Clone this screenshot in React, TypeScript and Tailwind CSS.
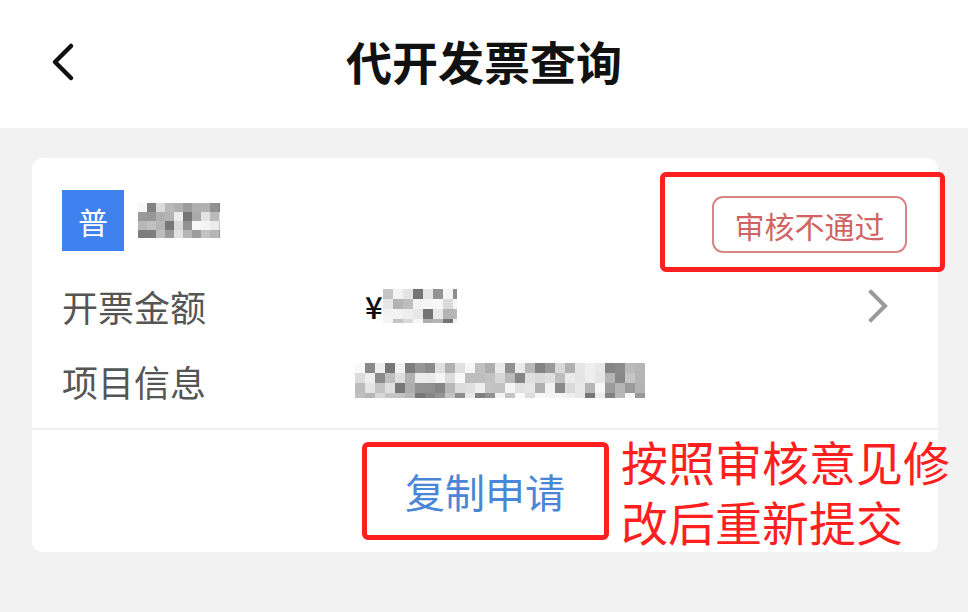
import React from "react";

const FONT = '"Noto Sans CJK SC", "Noto Sans", sans-serif';
const NOTE_FONT = '"Liberation Sans", "Noto Sans CJK SC", sans-serif';

function Mosaic({ w, h, cell, seed, dark }: { w: number; h: number; cell: number; seed: number; dark: number }) {
  const cols = Math.ceil(w / cell);
  const rows = Math.ceil(h / cell);
  let s = seed;
  const rnd = () => {
    s = (s * 9301 + 49297) % 233280;
    return s / 233280;
  };
  const rects: React.ReactNode[] = [];
  for (let r = 0; r < rows; r++) {
    for (let c = 0; c < cols; c++) {
      const v = rnd();
      let g: number;
      if (v < dark) g = 110 + Math.floor(rnd() * 50);
      else if (v < dark + 0.3) g = 170 + Math.floor(rnd() * 30);
      else g = 215 + Math.floor(rnd() * 35);
      rects.push(
        <rect key={r * 100 + c} x={c * cell} y={r * cell} width={cell} height={cell} fill={`rgb(${g},${g},${g})`} />
      );
    }
  }
  return (
    <svg width={w} height={h} viewBox={`0 0 ${w} ${h}`} className="block">
      {rects}
    </svg>
  );
}

export default function App() {
  return (
    <div className="w-[968px] h-[612px] bg-[#f2f2f2] overflow-hidden" style={{ fontFamily: FONT }}>
      {/* Header */}
      <div className="h-[128px] bg-white grid grid-cols-[1fr_auto_1fr] items-center pb-[8px]">
        <div className="pl-[50px] flex items-center pt-[4px]">
          <svg width="28" height="40" viewBox="0 0 28 40">
            <polyline points="21,4 5,20 21,36" fill="none" stroke="#111" strokeWidth="4.5" strokeLinecap="round" strokeLinejoin="round" />
          </svg>
        </div>
        <div className="text-[46px] font-bold text-[#111] leading-none">代开发票查询</div>
        <div />
      </div>

      {/* Card */}
      <div className="mt-[30px] ml-[32px] w-[906px] bg-white rounded-[10px] relative">
        <div className="flex items-start justify-between pt-[32px] pl-[30px] pr-[31px]">
          <div className="flex items-center gap-[14px]">
            <div className="w-[62px] h-[61px] bg-[#3f82ef] text-white text-[30px] flex items-center justify-center leading-none">普</div>
            <Mosaic w={82} h={35} cell={9} seed={17} dark={0.35} />
          </div>
          <div className="mt-[6px] w-[195px] h-[57px] border-2 border-[#d78585] rounded-[11px] flex items-center justify-center text-[30px] text-[#d06464] leading-none">
            审核不通过
          </div>
        </div>

        {/* annotation box around status */}
        <div className="absolute left-[628px] top-[14px] w-[285px] h-[100px] border-[5px] border-[#ff1f1f] rounded-[6px]" />

        <div className="pl-[30px] pr-[48px] mt-[15px] flex items-center h-[75px]">
          <div className="w-[303px] text-[36px] text-[#555] leading-none">开票金额</div>
          <div className="flex items-center flex-1">
            <span className="text-[31px] font-medium text-[#111] leading-none">¥</span>
            <Mosaic w={74} h={34} cell={10} seed={5} dark={0.15} />
          </div>
          <svg width="24" height="36" viewBox="0 0 24 36">
            <polyline points="5,4 19,18 5,32" fill="none" stroke="#9a9a9a" strokeWidth="4" strokeLinecap="square" />
          </svg>
        </div>
        <div className="pl-[30px] flex items-center h-[75px]">
          <div className="w-[293px] text-[36px] text-[#555] leading-none">项目信息</div>
          <Mosaic w={290} h={35} cell={10} seed={41} dark={0.3} />
        </div>

        <div className="h-[2px] bg-[#eeeeee] mt-[10px]" />

        <div className="h-[122px] relative flex items-center justify-center">
          <div className="w-[247px] h-[98px] border-[5px] border-[#ff1f1f] rounded-[6px] flex items-center justify-center text-[40px] text-[#4a86d6] leading-none">
            复制申请
          </div>
          <div
            className="absolute left-[589px] top-[5px] w-[340px] text-[47px] text-[#ff1f1f] flex flex-col"
            style={{ fontFamily: NOTE_FONT }}
          >
            <div className="h-[60px] leading-[60px]">按照审核意见修</div>
            <div className="h-[60px] leading-[60px]">改后重新提交</div>
          </div>
        </div>
      </div>
    </div>
  );
}
